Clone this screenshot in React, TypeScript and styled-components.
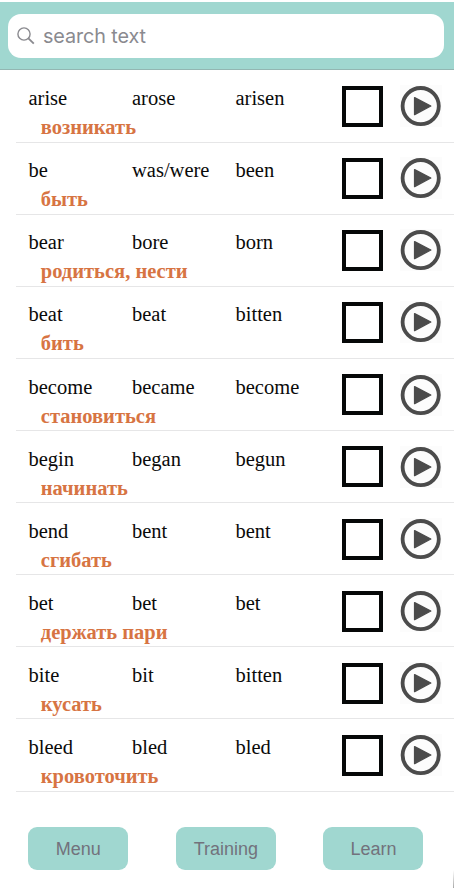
import React from "react";
import styled, { createGlobalStyle } from "styled-components";

const GlobalStyle = createGlobalStyle`
  * { box-sizing: border-box; }
  body { margin: 0; background: #fff; overflow: hidden; }
`;

const Screen = styled.main`
  width: 454px;
  height: 888px;
  padding-top: 2px;
  display: flex;
  flex-direction: column;
  background: linear-gradient(#fff, #a8a8a8) right bottom / 1px 18px no-repeat #fff;
`;

const Header = styled.header`
  height: 68px;
  flex: none;
  padding: 12px 10px 0 8px;
  background: #a0d7d0;
  border-bottom: 1px solid #93b6b2;
`;

const SearchField = styled.label`
  height: 44px;
  display: flex;
  align-items: center;
  gap: 8px;
  padding-left: 9px;
  background: #fff;
  border-radius: 13px;
`;

const SearchInput = styled.input`
  flex: 1;
  min-width: 0;
  height: 30px;
  padding: 0;
  border: 0;
  outline: 0;
  background: transparent;
  font: 400 19.8px Inter, sans-serif;
  letter-spacing: -0.1px;
  color: #8a8a8f;
  &::placeholder { color: #8a8a8f; opacity: 1; }
`;

const VerbList = styled.ul`
  flex: none;
  list-style: none;
  margin: 0;
  padding: 0.6px 0 0 16px;
`;

const VerbRow = styled.li`
  height: 72.1px;
  display: flex;
  border-bottom: 1px solid #e6e6e7;
`;

const Words = styled.div`
  width: 326.4px;
  padding: 15.6px 0 0 12.5px;
`;

const Forms = styled.div`
  display: grid;
  grid-template-columns: 103.5px 103.5px 1fr;
  font: 20.5px/24px "Liberation Serif", serif;
  color: #0a0a0a;
`;

const Translation = styled.div`
  padding: 5px 0 0 12.3px;
  font: bold 20.5px/24px "Liberation Serif", serif;
  color: #d77443;
`;

const Checkbox = styled.button`
  width: 41px;
  height: 41px;
  margin-top: 15.4px;
  padding: 0;
  background: #fff;
  border: 4px solid #060808;
  border-radius: 0;
`;

const PlayButton = styled.button`
  width: 42px;
  height: 42px;
  margin: 14.6px 0 0 16.6px;
  padding: 0;
  border: 0;
  background: #fcfcfc;
  svg { display: block; }
`;

const Footer = styled.nav`
  display: flex;
  justify-content: space-between;
  padding: 35.8px 30.5px 0 28.3px;
`;

const NavButton = styled.button`
  width: 100px;
  height: 43px;
  padding: 1px 0 0;
  border: 0;
  border-radius: 9px;
  background: #a0d7d0;
  color: #72727c;
  font: 18px "Liberation Sans", sans-serif;
`;

interface Verb {
  forms: [string, string, string];
  translation: string;
}

const verbs: Verb[] = [
  { forms: ["arise", "arose", "arisen"], translation: "возникать" },
  { forms: ["be", "was/were", "been"], translation: "быть" },
  { forms: ["bear", "bore", "born"], translation: "родиться, нести" },
  { forms: ["beat", "beat", "bitten"], translation: "бить" },
  { forms: ["become", "became", "become"], translation: "становиться" },
  { forms: ["begin", "began", "begun"], translation: "начинать" },
  { forms: ["bend", "bent", "bent"], translation: "сгибать" },
  { forms: ["bet", "bet", "bet"], translation: "держать пари" },
  { forms: ["bite", "bit", "bitten"], translation: "кусать" },
  { forms: ["bleed", "bled", "bled"], translation: "кровоточить" },
];

const SearchIcon = () => (
  <svg width="18" height="18" viewBox="0 0 18 18" fill="none" stroke="#8a8a8f">
    <circle cx="7" cy="7" r="6.1" strokeWidth="1.4" />
    <path d="M11.4 11.4 16.8 16.6" strokeWidth="1.9" />
  </svg>
);

const PlayIcon = () => (
  <svg width="42" height="42" viewBox="0 0 42 42">
    <circle cx="20.7" cy="21.1" r="18.1" fill="none" stroke="#4b4b4b" strokeWidth="3.8" />
    <path d="M14.6 12.6 30.8 21 14.6 29.6Z" fill="#4b4b4b" stroke="#4b4b4b" strokeWidth="1.4" strokeLinejoin="round" />
  </svg>
);

export default function App() {
  return (
    <Screen>
      <GlobalStyle />
      <Header>
        <SearchField>
          <SearchIcon />
          <SearchInput placeholder="search text" />
        </SearchField>
      </Header>
      <VerbList>
        {verbs.map(({ forms, translation }) => (
          <VerbRow key={forms[0]}>
            <Words>
              <Forms>
                {forms.map((form, i) => (
                  <span key={i}>{form}</span>
                ))}
              </Forms>
              <Translation>{translation}</Translation>
            </Words>
            <Checkbox aria-label="Select" />
            <PlayButton aria-label="Play">
              <PlayIcon />
            </PlayButton>
          </VerbRow>
        ))}
      </VerbList>
      <Footer>
        <NavButton>Menu</NavButton>
        <NavButton>Training</NavButton>
        <NavButton>Learn</NavButton>
      </Footer>
    </Screen>
  );
}
